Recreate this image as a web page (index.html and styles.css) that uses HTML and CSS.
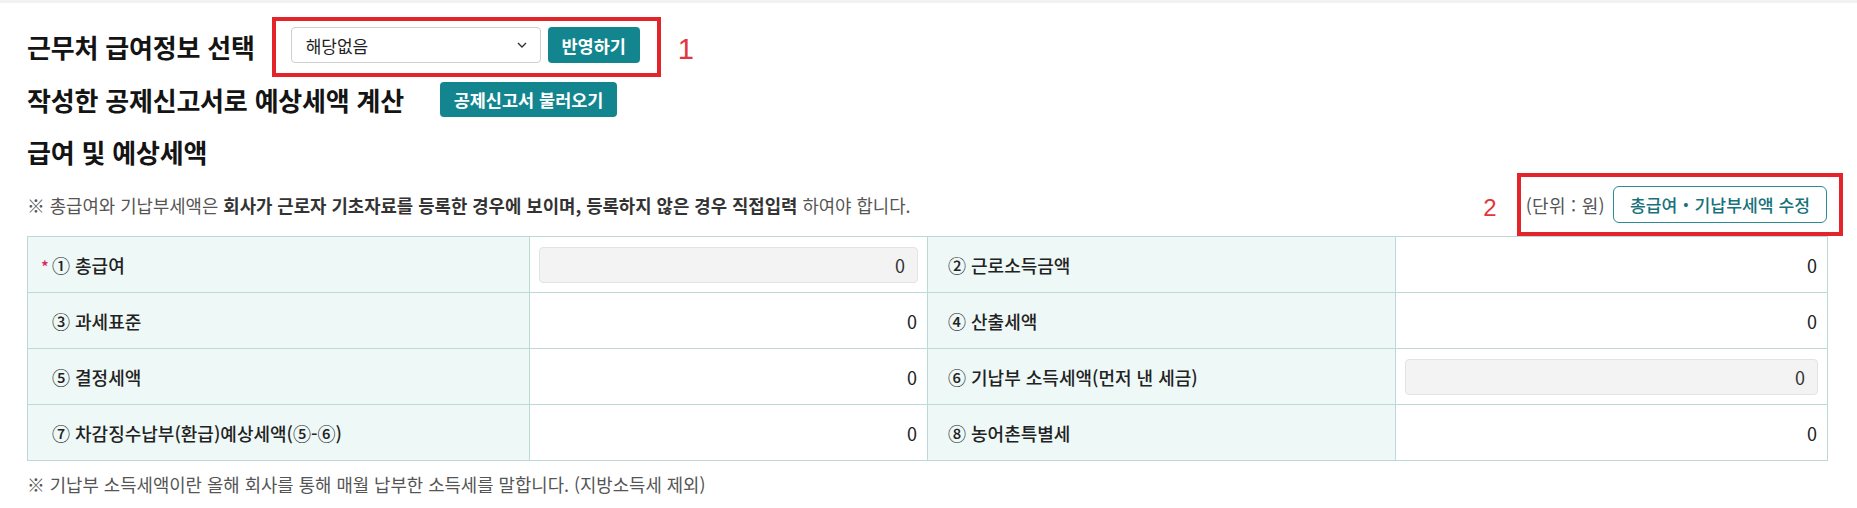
FILE: index.html
```html
<!DOCTYPE html>
<html lang="ko">
<head>
<meta charset="utf-8">
<title>급여 및 예상세액</title>
<link rel="stylesheet" href="styles.css">
</head>
<body>
<div class="topbar"></div>
<main class="page">
  <div class="row row-1">
    <h2 class="title">근무처 급여정보 선택</h2>
    <div class="annotated group-1">
      <div class="select">
        <span>해당없음</span>
        <svg class="chev" width="10" height="6" viewBox="0 0 10 6"><path d="M1 1l4 4 4-4" fill="none" stroke="#333" stroke-width="1.4"/></svg>
      </div>
      <button class="btn btn-solid btn-apply">반영하기</button>
      <span class="anno-box box-1"></span>
    </div>
    <span class="anno-num num-1">1</span>
  </div>

  <div class="row row-2">
    <h2 class="title">작성한 공제신고서로 예상세액 계산</h2>
    <button class="btn btn-solid btn-load">공제신고서 불러오기</button>
  </div>

  <h2 class="title title-3">급여 및 예상세액</h2>

  <div class="note-row">
    <p class="note">※ 총급여와 기납부세액은 <b>회사가 근로자 기초자료를 등록한 경우에 보이며, 등록하지 않은 경우 직접입력</b> 하여야 합니다.</p>
    <div class="note-right">
      <span class="anno-num num-2">2</span>
      <div class="annotated group-2">
        <span class="unit">(단위 : 원)</span>
        <button class="btn btn-outline">총급여・기납부세액 수정</button>
        <span class="anno-box box-2"></span>
      </div>
    </div>
  </div>

  <table class="tax-table">
    <colgroup>
      <col class="c1"><col class="c2"><col class="c3"><col class="c4">
    </colgroup>
    <tbody>
      <tr>
        <th class="lab lab-l"><span class="req">*</span>① 총급여</th>
        <td class="inp"><div class="field">0</div></td>
        <th class="lab lab-r">② 근로소득금액</th>
        <td class="val">0</td>
      </tr>
      <tr>
        <th class="lab lab-l">③ 과세표준</th>
        <td class="val">0</td>
        <th class="lab lab-r">④ 산출세액</th>
        <td class="val">0</td>
      </tr>
      <tr>
        <th class="lab lab-l">⑤ 결정세액</th>
        <td class="val">0</td>
        <th class="lab lab-r">⑥ 기납부 소득세액(먼저 낸 세금)</th>
        <td class="inp"><div class="field">0</div></td>
      </tr>
      <tr>
        <th class="lab lab-l">⑦ 차감징수납부(환급)예상세액(⑤-⑥)</th>
        <td class="val">0</td>
        <th class="lab lab-r">⑧ 농어촌특별세</th>
        <td class="val">0</td>
      </tr>
    </tbody>
  </table>

  <p class="footnote">※ 기납부 소득세액이란 올해 회사를 통해 매월 납부한 소득세를 말합니다. (지방소득세 제외)</p>
</main>
</body>
</html>
```

FILE: styles.css
```css
* { box-sizing: border-box; }

html, body {
  margin: 0;
  padding: 0;
  background: #fff;
  font-family: "Noto Sans CJK KR", "Noto Sans", sans-serif;
  color: #222;
}

.topbar {
  height: 3px;
  background: #f2f2f2;
}

.page {
  padding: 0 30px 0 27px;
}

.row {
  display: flex;
  align-items: center;
}

.title {
  margin: 0 36px 0 0;
  font-size: 26px;
  font-weight: 700;
  line-height: 36px;
  letter-spacing: -0.2px;
  color: #141414;
  white-space: nowrap;
}

.row-1 {
  margin-top: 24px;
  height: 36px;
}

.row-1 .title {
  padding-top: 4px;
}

.row-2 {
  margin-top: 19px;
  height: 35px;
}

.title-3 {
  margin-top: 17px;
}

.annotated {
  position: relative;
  display: flex;
  align-items: center;
}

.anno-box {
  position: absolute;
  border: 4px solid #e3242b;
  pointer-events: none;
}

.box-1 {
  left: -19px;
  right: -21px;
  top: -10px;
  bottom: -14px;
}

.box-2 {
  left: -9px;
  right: -16px;
  top: -13px;
  bottom: -13px;
}

.anno-num {
  font-family: "Liberation Sans", Arial, sans-serif;
  color: #e2363c;
  line-height: 1;
}

.num-1 {
  font-size: 29px;
  margin-left: 38px;
  padding-top: 9px;
}

.num-2 {
  font-size: 24px;
  margin-right: 29px;
  padding-top: 6px;
}

.select {
  width: 250px;
  height: 36px;
  border: 1px solid #cfcfcf;
  border-radius: 4px;
  display: flex;
  align-items: center;
  justify-content: space-between;
  padding: 0 13px 0 14px;
  font-size: 17px;
  color: #222;
  background: #fff;
}

.chev {
  display: block;
}

.btn {
  font-family: inherit;
  cursor: pointer;
  white-space: nowrap;
  margin: 0;
}

.btn-solid {
  background: #13858f;
  color: #fff;
  border: none;
  border-radius: 4px;
  font-size: 17.5px;
  font-weight: 700;
  padding: 0;
}

.btn-apply {
  margin-left: 7px;
  width: 92px;
  height: 36px;
}

.btn-load {
  width: 177px;
  height: 35px;
}

.note-row {
  margin-top: 16px;
  height: 37px;
  display: flex;
  align-items: center;
  justify-content: space-between;
}

.note {
  margin: 0;
  font-size: 17.8px;
  color: #555;
  line-height: 24px;
  white-space: nowrap;
}

.note b {
  color: #333;
  font-weight: 700;
}

.note-right {
  display: flex;
  align-items: center;
}

.unit {
  font-size: 18px;
  letter-spacing: 0.3px;
  color: #555;
  margin-right: 8px;
}

.btn-outline {
  width: 214px;
  height: 37px;
  background: #fff;
  color: #17727b;
  border: 1px solid #2a8c95;
  border-radius: 6px;
  font-size: 17.2px;
  font-weight: 500;
  padding: 0;
}

.tax-table {
  margin-top: 13px;
  width: 1800px;
  border-collapse: collapse;
  table-layout: fixed;
}

.c1 { width: 502px; }
.c2 { width: 398px; }
.c3 { width: 468px; }
.c4 { width: 432px; }

.tax-table tr {
  height: 56px;
}

.tax-table th,
.tax-table td {
  border: 1px solid #bcd9d8;
  padding: 0;
  font-size: 18px;
  vertical-align: middle;
}

.lab {
  background: #eef8f7;
  text-align: left;
  font-weight: 500;
  color: #222;
  white-space: nowrap;
}

.lab-l { padding-left: 24px !important; }
.lab-r { padding-left: 20px !important; }

.req {
  display: inline-block;
  width: 11px;
  margin-left: -11px;
  color: #e0245e;
  font-size: 16px;
}

.val {
  text-align: right;
  padding-right: 10px !important;
  color: #222;
}

.inp {
  padding: 0 9px !important;
}

.field {
  height: 36px;
  border: 1px solid #e3e3e3;
  border-radius: 4px;
  background: #f3f3f3;
  text-align: right;
  line-height: 34px;
  padding-right: 12px;
  color: #333;
}

.footnote {
  margin: 11px 0 0;
  font-size: 17.8px;
  line-height: 24px;
  color: #555;
}
```
